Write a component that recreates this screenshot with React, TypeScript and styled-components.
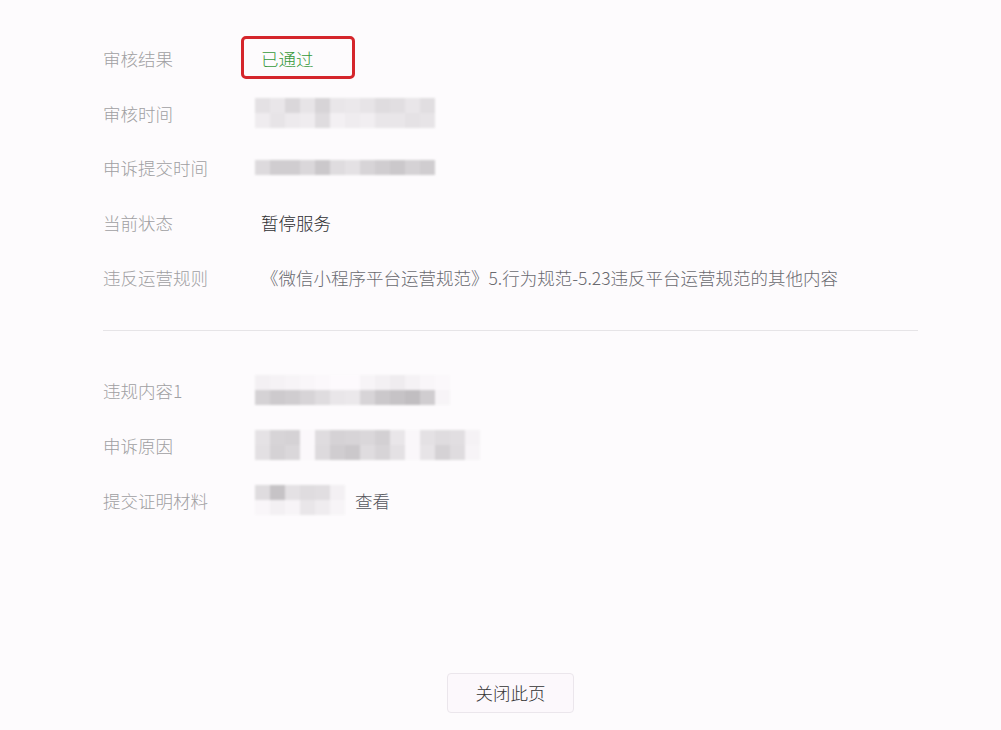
import React from "react";
import styled, { createGlobalStyle } from "styled-components";

const Global = createGlobalStyle`
  html, body { margin: 0; padding: 0; background: #fdfbfd; }
  body { font-family: "Noto Sans CJK SC", "Noto Sans", sans-serif; }
`;

const Page = styled.div`
  width: 1001px;
  height: 730px;
  background: #fdfbfd;
  padding: 31px 0 0 103px;
  box-sizing: border-box;
`;

const Container = styled.div`
  width: 815px;
  display: flex;
  flex-direction: column;
`;

const Section = styled.div<{ $rowH: number }>`
  display: grid;
  grid-auto-rows: ${(p) => p.$rowH}px;
`;

const Row = styled.div`
  display: grid;
  grid-template-columns: 152px 1fr;
  align-items: center;
`;

const Label = styled.div`
  font-size: 17.5px;
  color: #a09fa2;
  font-weight: 300;
`;

const Value = styled.div<{ $tone?: "dark" | "mid" | "green" }>`
  font-size: 17.5px;
  font-weight: 300;
  padding-left: ${(p) => (p.$tone ? "6px" : "0")};
  color: ${(p) =>
    p.$tone === "dark" ? "#2f2f33" : p.$tone === "green" ? "#36993a" : "#6a6a70"};
  display: flex;
  align-items: center;
  gap: 10px;
`;

const Highlight = styled.span`
  position: relative;
  &::after {
    content: "";
    position: absolute;
    box-sizing: border-box;
    left: -20px;
    top: -10px;
    width: 114px;
    height: 43px;
    border: 3px solid #d5252b;
    border-radius: 5px;
  }
`;

const Divider = styled.div`
  height: 1px;
  background: #e6e4e7;
  margin: 25px 0 32px;
`;

const Mosaic = styled.div<{ $cols: number }>`
  display: grid;
  grid-template-columns: repeat(${(p) => p.$cols}, 15px);
  grid-auto-rows: 15px;
  filter: blur(1.2px);
`;

const Cell = styled.div<{ $c: string }>`
  background: ${(p) => p.$c};
`;

const Link = styled.span`
  color: #55565c;
  font-size: 17.5px;
  font-weight: 300;
`;

const Footer = styled.div`
  display: flex;
  justify-content: center;
  margin-top: 145px;
`;

const Button = styled.button`
  width: 127px;
  height: 40px;
  border: 1px solid #ebe6ec;
  border-radius: 4px;
  background: #fcf8fc;
  color: #333;
  font-family: "Noto Sans CJK SC", sans-serif;
  font-size: 17.5px;
  font-weight: 300;
  cursor: pointer;
`;

const shade = (n: number) => {
  const v = 253 - n;
  return `rgb(${v}, ${v - 3}, ${v})`;
};

const Blur: React.FC<{ rows: number[][] }> = ({ rows }) => (
  <Mosaic $cols={rows[0].length}>
    {rows.flat().map((n, i) => (
      <Cell key={i} $c={shade(n)} />
    ))}
  </Mosaic>
);

const m2 = [
  [25, 20, 35, 22, 38, 20, 18, 22, 30, 28, 20, 28],
  [14, 22, 16, 14, 30, 10, 14, 12, 20, 20, 24, 22],
];
const m3 = [[32, 45, 45, 35, 50, 30, 25, 38, 45, 50, 40, 45]];
const m6 = [
  [10, 8, 6, 4, 2, 0, 0, 6, 10, 14, 8, 4, 2],
  [40, 48, 45, 38, 30, 20, 18, 38, 50, 55, 60, 45, 6],
];
const m7 = [
  [24, 38, 40, 2, 30, 40, 38, 35, 42, 20, 3, 25, 30, 28, 8],
  [26, 40, 35, 2, 32, 45, 50, 30, 38, 25, 3, 22, 40, 30, 6],
];
const m8 = [
  [30, 55, 25, 30, 28, 10],
  [4, 10, 6, 20, 14, 6],
];

export default function App() {
  return (
    <Page>
      <Global />
      <Container>
        <Section $rowH={54.75}>
          <Row>
            <Label>审核结果</Label>
            <Value $tone="green">
              <Highlight>已通过</Highlight>
            </Value>
          </Row>
          <Row>
            <Label>审核时间</Label>
            <Value><Blur rows={m2} /></Value>
          </Row>
          <Row>
            <Label>申诉提交时间</Label>
            <Value><Blur rows={m3} /></Value>
          </Row>
          <Row>
            <Label>当前状态</Label>
            <Value $tone="dark">暂停服务</Value>
          </Row>
          <Row>
            <Label>违反运营规则</Label>
            <Value $tone="mid">《微信小程序平台运营规范》5.行为规范-5.23违反平台运营规范的其他内容</Value>
          </Row>
        </Section>
        <Divider />
        <Section $rowH={55}>
          <Row>
            <Label>违规内容1</Label>
            <Value><Blur rows={m6} /></Value>
          </Row>
          <Row>
            <Label>申诉原因</Label>
            <Value><Blur rows={m7} /></Value>
          </Row>
          <Row>
            <Label>提交证明材料</Label>
            <Value>
              <Blur rows={m8} />
              <Link>查看</Link>
            </Value>
          </Row>
        </Section>
        <Footer>
          <Button>关闭此页</Button>
        </Footer>
      </Container>
    </Page>
  );
}
